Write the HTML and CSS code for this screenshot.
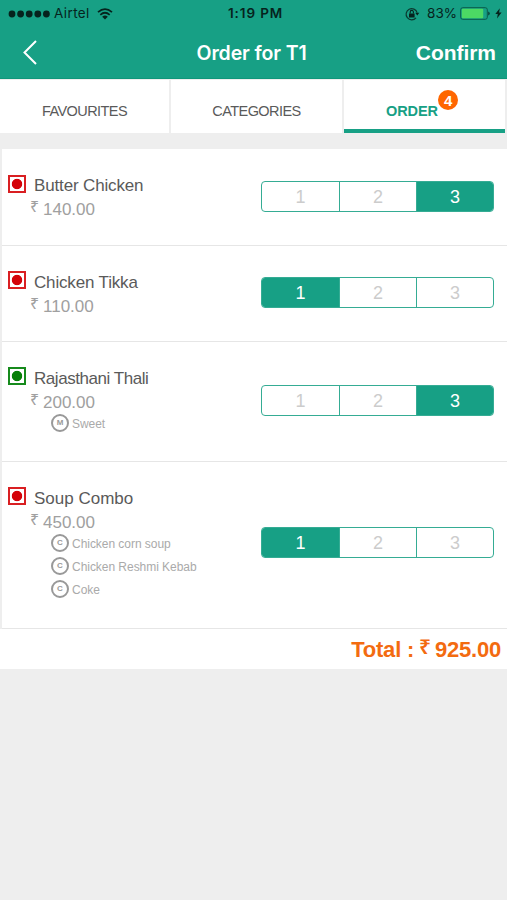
FILE: index.html
```
<!DOCTYPE html>
<html lang="en">
<head>
<meta charset="utf-8">
<title>Order for T1</title>
<link rel="stylesheet" href="styles.css">
</head>
<body>
<header class="top">
  <div class="status">
    <div class="carrier">
      <svg width="43" height="8" viewBox="0 0 43 8"><circle cx="4" cy="4" r="3.4"/><circle cx="12.6" cy="4" r="3.4"/><circle cx="21.2" cy="4" r="3.4"/><circle cx="29.8" cy="4" r="3.4"/><circle cx="38.4" cy="4" r="3.4"/></svg>
      <span class="network">Airtel</span>
      <svg class="wifi" width="16" height="12" viewBox="0 0 16 12"><path d="M1 4.2Q8-2 15 4.2M3.3 6.8Q8 2.7 12.7 6.8" fill="none" stroke="#06231d" stroke-width="1.7"/><path d="M5.2 8.7Q8 6.2 10.8 8.7L8 11.5z"/></svg>
    </div>
    <span class="time">1:19 PM</span>
    <div class="power">
      <svg width="15" height="14" viewBox="0 0 15 14"><path d="M11 10.8A5.6 5.6 0 1 1 12.1 5.7" fill="none" stroke="#0b392f" stroke-width="1.2"/><path d="M10.2 5.7h4.1l-2 2.8zM4 6.4h5.6v4H4z"/><path d="M5.2 6.6V5a1.6 1.6 0 0 1 3.2 0v1.6" fill="none" stroke="#06231d" stroke-width="1.1"/></svg>
      <span class="percent">83%</span>
      <svg class="battery" width="31" height="13" viewBox="0 0 31 13"><rect x=".7" y=".7" width="26.6" height="11.6" rx="2" fill="none" stroke="#0b5b49"/><rect x="1.8" y="1.8" width="21.4" height="9.4" rx="1" fill="#4cd964"/><path d="M28.4 4.5a2.3 2.3 0 0 1 0 4z"/></svg>
      <svg width="7" height="11" viewBox="0 0 7 11"><path d="M4.8.3.3 6.1h2.5L2 10.5l4.6-6H4.1z"/></svg>
    </div>
  </div>
  <nav class="bar">
    <svg class="back" width="14" height="25" viewBox="0 0 14 25"><path d="M13 1 1.5 12.5 13 24" fill="none" stroke="#fff" stroke-width="2"/></svg>
    <h1 class="title">Order for T1</h1>
    <span class="confirm">Confirm</span>
  </nav>
</header>
<div class="tabs">
  <div class="tab"><span class="fav">FAVOURITES</span></div>
  <div class="tab"><span class="cat">CATEGORIES</span></div>
  <div class="tab active"><span class="ord">ORDER<b class="badge">4</b></span></div>
</div>
<main class="list">
  <section class="row first">
    <i class="mark"></i>
    <div class="info"><div class="name n1">Butter Chicken</div><div class="price"><span class="rs">₹</span>140.00</div></div>
    <div class="qty"><span>1</span><span>2</span><span class="on">3</span></div>
  </section>
  <section class="row">
    <i class="mark"></i>
    <div class="info"><div class="name n2">Chicken Tikka</div><div class="price"><span class="rs">₹</span>110.00</div></div>
    <div class="qty"><span class="on">1</span><span>2</span><span>3</span></div>
  </section>
  <section class="row medium">
    <i class="mark veg"></i>
    <div class="info"><div class="name n3">Rajasthani Thali</div><div class="price"><span class="rs">₹</span>200.00</div>
      <div class="extra"><i class="ring">M</i><span>Sweet</span></div></div>
    <div class="qty"><span>1</span><span>2</span><span class="on">3</span></div>
  </section>
  <section class="row tall">
    <i class="mark"></i>
    <div class="info"><div class="name n4">Soup Combo</div><div class="price"><span class="rs">₹</span>450.00</div>
      <div class="extra"><i class="ring">C</i><span>Chicken corn soup</span></div>
      <div class="extra"><i class="ring">C</i><span>Chicken Reshmi Kebab</span></div>
      <div class="extra"><i class="ring">C</i><span>Coke</span></div></div>
    <div class="qty"><span class="on">1</span><span>2</span><span>3</span></div>
  </section>
</main>
<footer class="total"><span>Total :</span><span class="rs">₹</span><span>925.00</span></footer>
</body>
</html>
```
FILE: styles.css
```
* { box-sizing: border-box; }
body { margin: 0; width: 507px; height: 900px; overflow: hidden; background: #eee; font-family: "Liberation Sans", sans-serif; }
svg { display: block; flex: none; }

.top { height: 79px; background: #17a085; border-bottom: 1px solid #0f967a; }
.status { height: 27px; display: grid; grid-template-columns: 1fr 54px 1fr; align-items: center; padding: 0 5px 0 8px; font: 13.5px/27px Inter, sans-serif; color: #06231d; fill: #06231d; }
.carrier, .power { display: flex; align-items: center; }
.power { justify-content: flex-end; }
.network { margin-left: 3px; letter-spacing: .4px; }
.wifi { margin-left: 7px; }
.time { font-weight: 600; font-size: 13.5px; letter-spacing: .9px; white-space: nowrap; }
.percent { margin: 0 3px 0 7px; }
.battery { margin-right: 4px; }
.bar { height: 51px; display: grid; grid-template-columns: 1fr 115px 1fr; align-items: center; padding: 0 11px 0 12px; color: #fff; }
.back { margin-left: 11px; }
.title { margin: 0; font: 600 19.5px/50px Inter, sans-serif; letter-spacing: -.1px; white-space: nowrap; }
.confirm { justify-self: end; font: bold 21px/50px "Liberation Sans", sans-serif; letter-spacing: -.05px; }

.tabs { height: 54px; display: grid; grid-template-columns: 169px 171px 161px; column-gap: 2px; background: #eee; padding-top: 1px; }
.tab { display: flex; justify-content: center; background: #fff; font-size: 14.5px; letter-spacing: -.57px; line-height: 62px; height: 53px; color: #5a5a5a; }
.active { border-bottom: 4px solid #17a085; color: #17a085; font-weight: bold; height: 53px; }
.ord { position: relative; margin-right: 25px; letter-spacing: -.1px; }
.badge { position: absolute; left: 52px; top: 10px; width: 20px; height: 20px; border-radius: 50%; background: #ff6600; color: #fff; font-size: 15px; line-height: 21px; text-align: center; }

.list { margin-top: 16px; border-left: 2px solid #eee; }
.row { height: 96px; display: grid; grid-template-columns: 18px 1fr 233px; padding: 0 13px 0 6px; background: #fff; border-bottom: 1px solid #e6e6e6; }
.first { height: 97px; }
.medium { height: 120px; }
.tall { height: 167px; }
.mark { width: 18px; height: 18px; margin-top: 25px; border: 2px solid #d91f22; background: radial-gradient(circle, #d4040a 0 4.8px, #fff 5.6px); }
.first .mark { margin-top: 26px; }
.veg { border-color: #168a1c; background: radial-gradient(circle, #078008 0 4.8px, #fff 5.6px); }
.info { padding-top: 26px; }
.name { margin-left: 8px; font-size: 17px; line-height: 22px; color: #5a5a5a; white-space: nowrap; }
.n1 { letter-spacing: -.15px; }
.n2 { letter-spacing: -.16px; }
.n3 { letter-spacing: -.45px; }
.price { display: flex; margin-left: 4px; font-size: 17px; line-height: 25px; color: #a0a0a0; }
.price .rs { width: 13px; font: 16px/19px "Noto Sans", sans-serif; }
.extra { display: flex; align-items: center; height: 23.3px; margin-left: 25px; font-size: 12px; color: #aaa; white-space: nowrap; }
.info .price + .extra { margin-top: -4px; }
.ring { width: 18px; height: 18px; margin-right: 3px; border: 2.5px solid #999; border-radius: 50%; font: bold 8px/13px "Liberation Sans", sans-serif; text-align: center; color: #999; }
.extra span { padding-top: 2px; letter-spacing: -.04px; }
.qty { align-self: center; height: 31px; margin-bottom: 2px; display: grid; grid-template-columns: repeat(3, 1fr); border: 1px solid #35ac94; border-radius: 4px; overflow: hidden; text-align: center; font-size: 18px; line-height: 31px; color: #ccc; }
.qty span + span { border-left: 1px solid #35ac94; }
.qty .on { background: #17a085; color: #fff; }
.tall .qty { margin-bottom: 5px; }

.total { height: 40px; display: flex; justify-content: flex-end; padding-right: 6px; background: #fff; color: #f36b10; font-weight: bold; font-size: 22px; letter-spacing: -.2px; line-height: 41px; }
.total .rs { margin: 0 4px 0 5px; font: 600 21px/35px "Noto Sans", sans-serif; }
```
